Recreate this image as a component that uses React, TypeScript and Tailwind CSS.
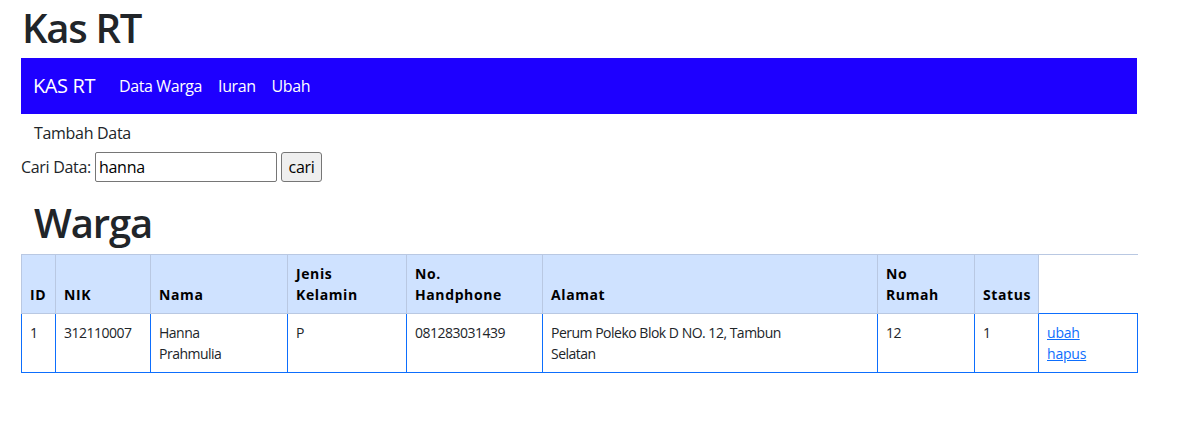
import React from "react";

const L = "border-[#b9c8e2]";
const B = "border-[#0d6efd]";

const headers: string[][] = [
  ["ID"],
  ["NIK"],
  ["Nama"],
  ["Jenis", "Kelamin"],
  ["No.", "Handphone"],
  ["Alamat"],
  ["No", "Rumah"],
  ["Status"],
];

const row: string[][] = [
  ["1"],
  ["312110007"],
  ["Hanna", "Prahmulia"],
  ["P"],
  ["081283031439"],
  ["Perum Poleko Blok D NO. 12, Tambun", "Selatan"],
  ["12"],
  ["1"],
];

export default function App() {
  return (
    <div
      className="min-h-screen bg-white text-[#212529]"
      style={{ fontFamily: "'Open Sans', 'Noto Sans', sans-serif" }}
    >
      <div className="ml-[21px] w-[1116px]">
        <h1 className="m-0 h-[52px] pl-[1px] pt-[4px] text-[40px] font-semibold leading-[48px] tracking-[-1.3px]">Kas RT</h1>
        <nav className="mt-[6px] flex h-[56px] items-center bg-[#1e00ff] px-[12px] text-white tracking-[-0.4px]">
          <span className="mr-[16px] text-[20px] leading-[30px]">KAS RT</span>
          <div className="flex text-[16px] leading-[24px]">
            <span className="px-[8px]">Data Warga</span>
            <span className="px-[8px]">Iuran</span>
            <span className="px-[8px]">Ubah</span>
          </div>
        </nav>
        <div className="mt-[7px] pl-[13px] text-[16px] leading-[24px] tracking-[-0.3px]">Tambah Data</div>
        <form className="mt-[7px] flex h-[30px] items-center text-[16px] tracking-[-0.3px]" onSubmit={(e) => e.preventDefault()}>
          <label className="mr-[4px] leading-[24px]">Cari Data:</label>
          <input
            defaultValue="hanna"
            className="h-[30px] w-[182px] rounded-[2px] border border-[#767676] px-[3px] text-[16px] text-black outline-none tracking-[-0.3px]"
            style={{ fontFamily: "inherit" }}
          />
          <button
            type="submit"
            className="ml-[4px] h-[30px] w-[41px] rounded-[3px] border border-[#767676] bg-[#efefef] text-[16px] text-black tracking-[-0.3px]"
            style={{ fontFamily: "inherit" }}
          >
            cari
          </button>
        </form>
        <h1 className="m-0 mt-[15px] h-[48px] pl-[13px] pt-[2px] text-[40px] font-semibold leading-[48px] tracking-[-1.1px]">Warga</h1>
        <div className="mt-[9px] grid w-[1117px] grid-cols-[34px_95px_137px_119px_136px_335px_97px_64px_100px] text-[14px] leading-[21px]">
          {headers.map((h, i) => (
            <div
              key={i}
              className={`flex h-[60px] flex-col justify-end border-y border-l ${L} bg-[#cfe2ff] px-[8px] py-[8px] font-bold text-black tracking-[0.6px]`}
            >
              {h.map((t, j) => (
                <span key={j} className="whitespace-nowrap">{t}</span>
              ))}
            </div>
          ))}
          <div className={`h-[60px] border-l border-t ${L} border-b-[#0d6efd] border-b bg-white`} />
          {row.map((c, i) => (
            <div key={i} className={`h-[59px] border-b border-l ${B} px-[8px] py-[8px] tracking-[-0.5px]`}>
              {c.map((t, j) => (
                <div key={j} className="whitespace-nowrap">{t}</div>
              ))}
            </div>
          ))}
          <div className={`h-[59px] border-b border-l border-r ${B} px-[8px] py-[8px] tracking-[-0.2px]`}>
            <div>
              <a href="#" className="text-[#0d6efd] underline">ubah</a>
            </div>
            <div>
              <a href="#" className="text-[#0d6efd] underline">hapus</a>
            </div>
          </div>
        </div>
      </div>
    </div>
  );
}
